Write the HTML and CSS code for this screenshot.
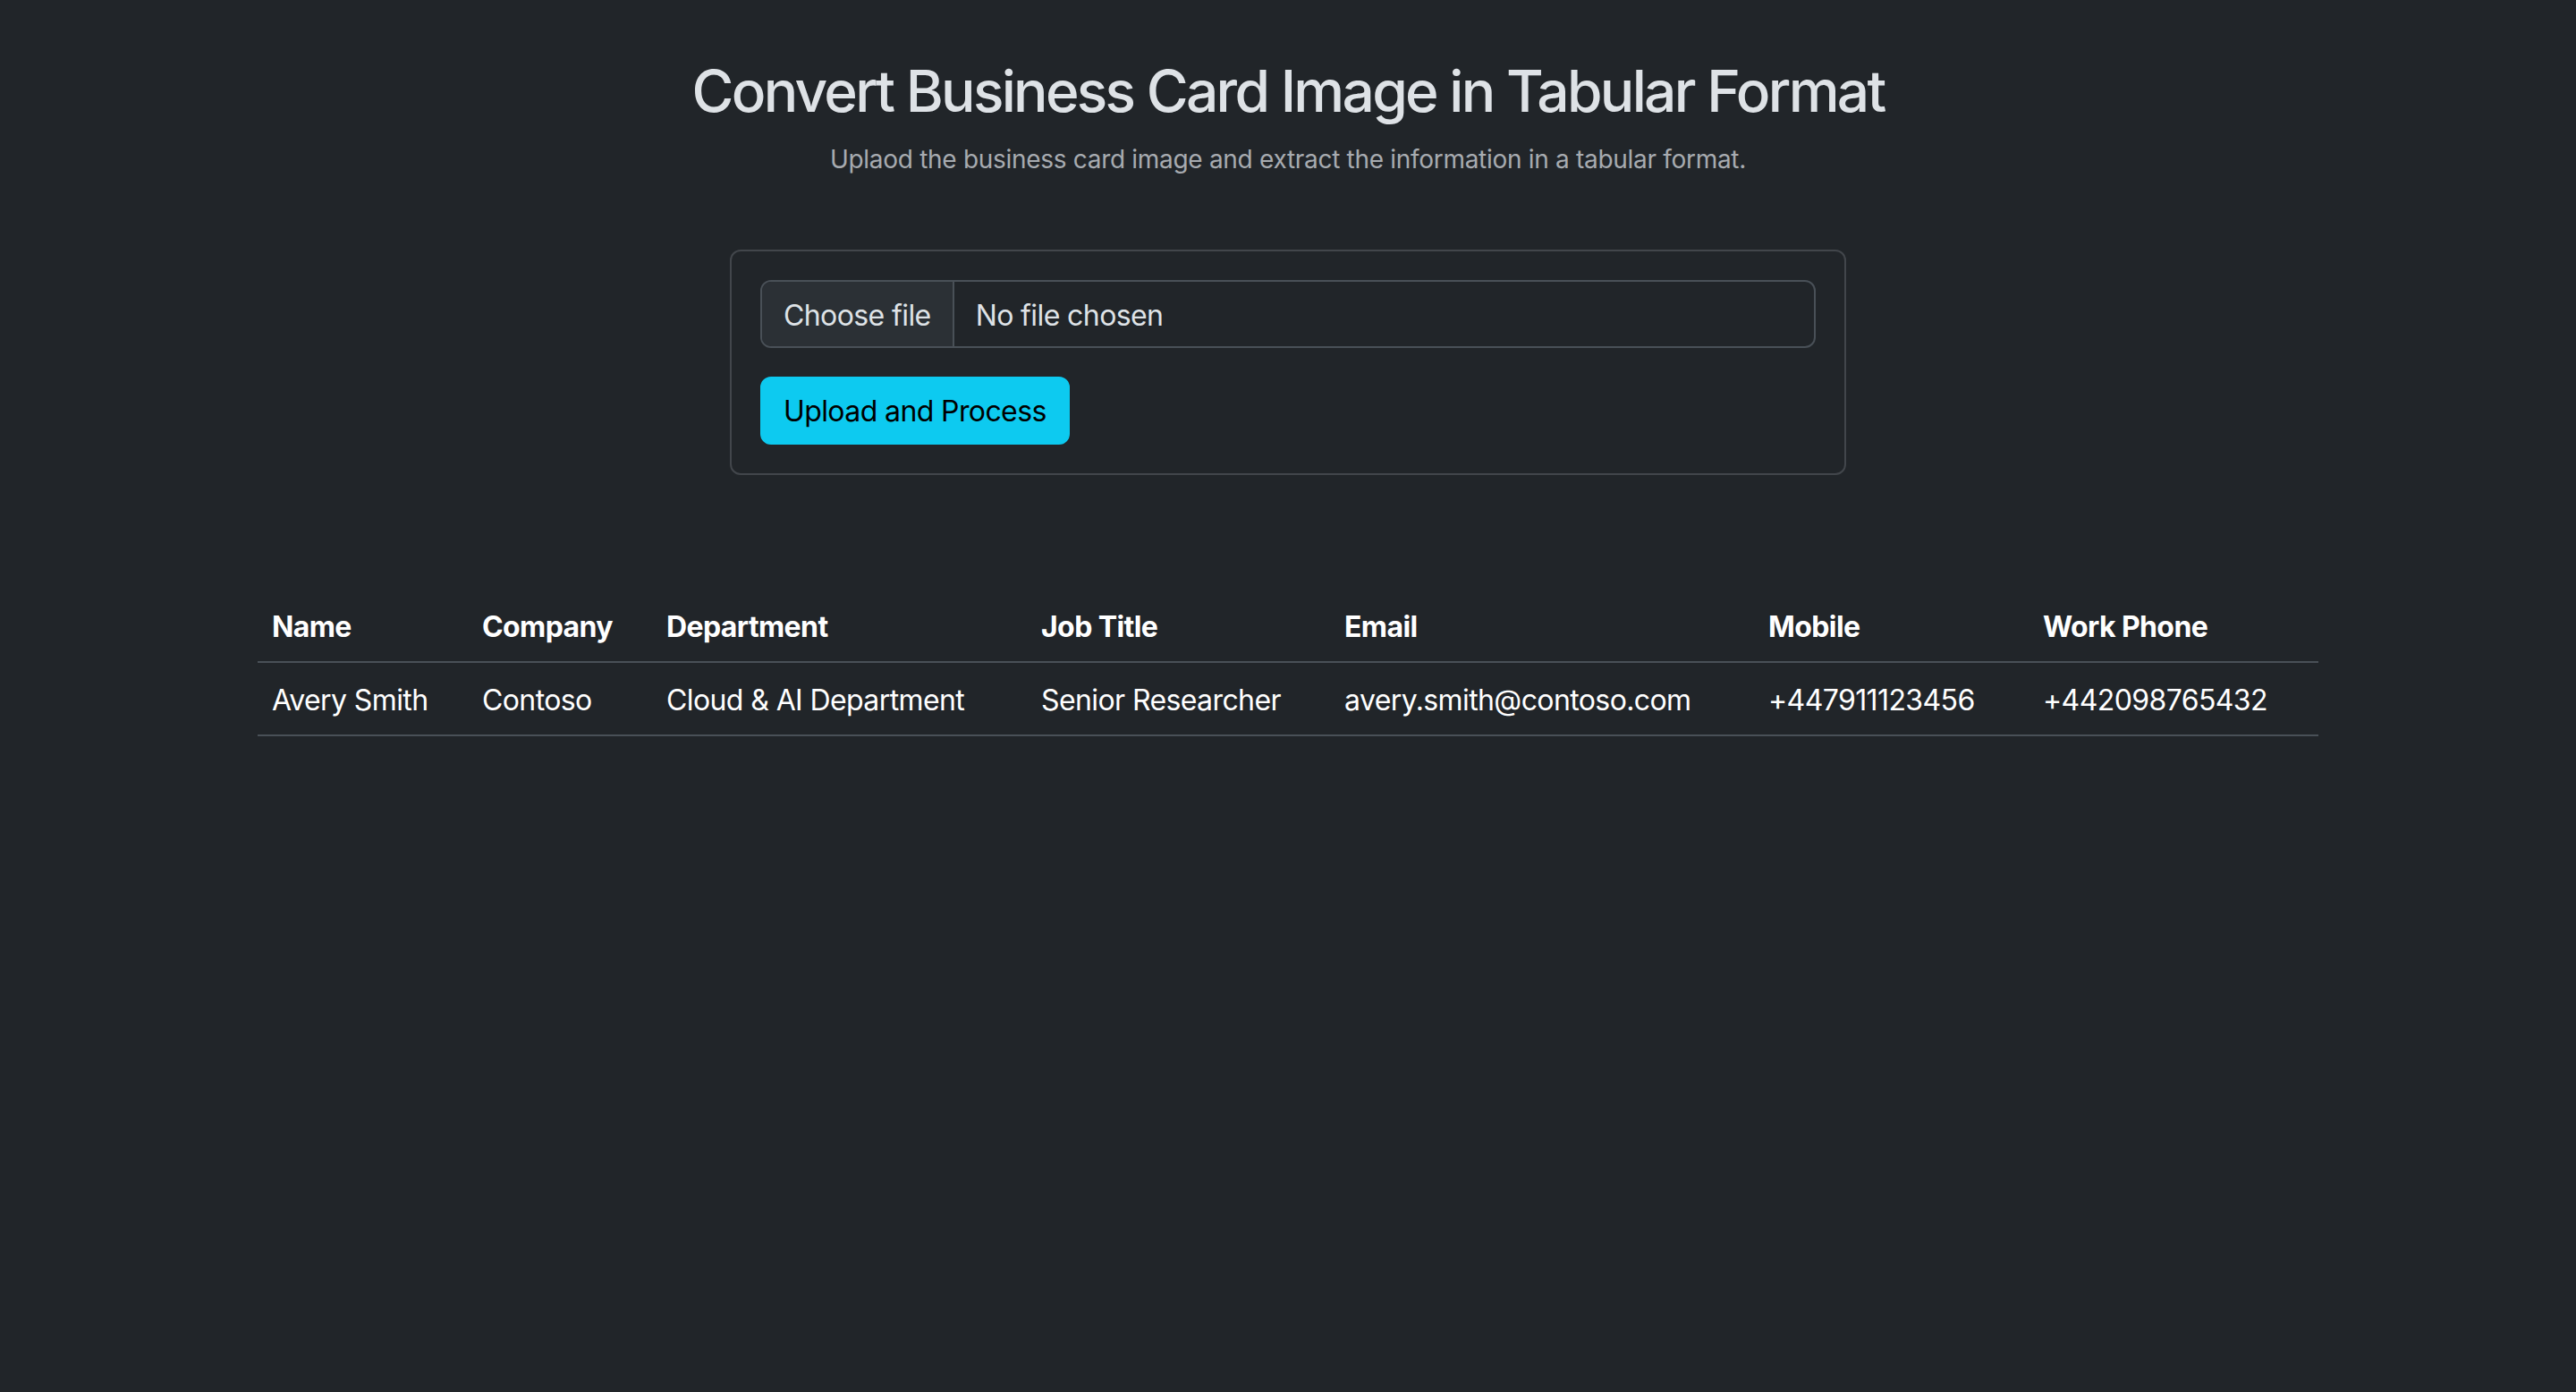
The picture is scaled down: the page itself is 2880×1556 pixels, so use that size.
FILE: index.html
```html
<!DOCTYPE html>
<html lang="en">
<head>
<meta charset="utf-8">
<title>Convert Business Card Image in Tabular Format</title>
<link rel="stylesheet" href="styles.css">
</head>
<body>
<main class="container">
  <h1 class="title">Convert Business Card Image in Tabular Format</h1>
  <p class="subtitle">Uplaod the business card image and extract the information in a tabular format.</p>

  <form class="card">
    <label class="file-field">
      <input class="file-hidden" type="file" name="file">
      <span class="file-btn">Choose file</span>
      <span class="file-name">No file chosen</span>
    </label>
    <button class="btn-info" type="button">Upload and Process</button>
  </form>

  <table class="results">
    <thead>
      <tr>
        <th class="c-name">Name</th>
        <th class="c-company">Company</th>
        <th class="c-dept">Department</th>
        <th class="c-job">Job Title</th>
        <th class="c-email">Email</th>
        <th class="c-mobile">Mobile</th>
        <th class="c-work">Work Phone</th>
      </tr>
    </thead>
    <tbody>
      <tr>
        <td>Avery Smith</td>
        <td>Contoso</td>
        <td>Cloud &amp; AI Department</td>
        <td>Senior Researcher</td>
        <td>avery.smith@contoso.com</td>
        <td>+447911123456</td>
        <td>+442098765432</td>
      </tr>
    </tbody>
  </table>
</main>
</body>
</html>
```

FILE: styles.css
```css
* { box-sizing: border-box; }

html, body {
  margin: 0;
  background: #212529;
}

body {
  font-family: Inter, "Noto Sans", "Liberation Sans", sans-serif;
  color: #dee2e6;
  font-size: 32px;
  line-height: 1.5;
}

.container {
  width: 2304px;
  margin: 0 auto;
  padding-top: 64px;
}

.title {
  margin: 0 0 16px;
  font-size: 64px;
  font-weight: 500;
  line-height: 1.2;
  text-align: center;
  color: #dee2e6;
  letter-spacing: -2.7px;
}

.subtitle {
  margin: 0;
  font-size: 28px;
  line-height: 1.5;
  text-align: center;
  color: #a7abb0;
  letter-spacing: -0.3px;
}

.card {
  width: 1248px;
  margin: 80px auto 0;
  padding: 32px;
  border: 2px solid #42464b;
  border-radius: 12px;
  display: flex;
  flex-direction: column;
  align-items: flex-start;
  gap: 32px;
}

.file-field {
  display: flex;
  width: 100%;
  height: 76px;
  font-size: 32px;
  line-height: 48px;
  color: #dee2e6;
  background: #212529;
  border: 2px solid #495057;
  border-radius: 12px;
  overflow: hidden;
  letter-spacing: -0.6px;
  cursor: pointer;
}

.file-hidden {
  position: absolute;
  width: 1px;
  height: 1px;
  opacity: 0;
  overflow: hidden;
}

.file-btn {
  padding: 14px 24px 10px;
  background: #2b3035;
  border-right: 2px solid #495057;
}

.file-name {
  padding: 14px 24px 10px;
}

.btn-info {
  padding: 13px 24px 11px;
  font-family: inherit;
  font-size: 32px;
  line-height: 1.5;
  color: #000;
  background: #0dcaf0;
  border: 2px solid #0dcaf0;
  border-radius: 12px;
  letter-spacing: -0.6px;
}

.results {
  width: 100%;
  margin-top: 128px;
  border-collapse: collapse;
  table-layout: fixed;
  color: #fff;
  letter-spacing: -0.6px;
}

.results th,
.results td {
  padding: 18px 16px 14px;
  text-align: left;
  vertical-align: top;
  border-bottom: 2px solid #495057;
  line-height: 48px;
  white-space: nowrap;
}

.results th { font-weight: 700; }
.results td { font-weight: 400; }

.c-name { width: 235px; }
.c-company { width: 206px; }
.c-dept { width: 419px; }
.c-job { width: 339px; }
.c-email { width: 474px; }
.c-mobile { width: 307px; }
.c-work { width: 324px; }
```
